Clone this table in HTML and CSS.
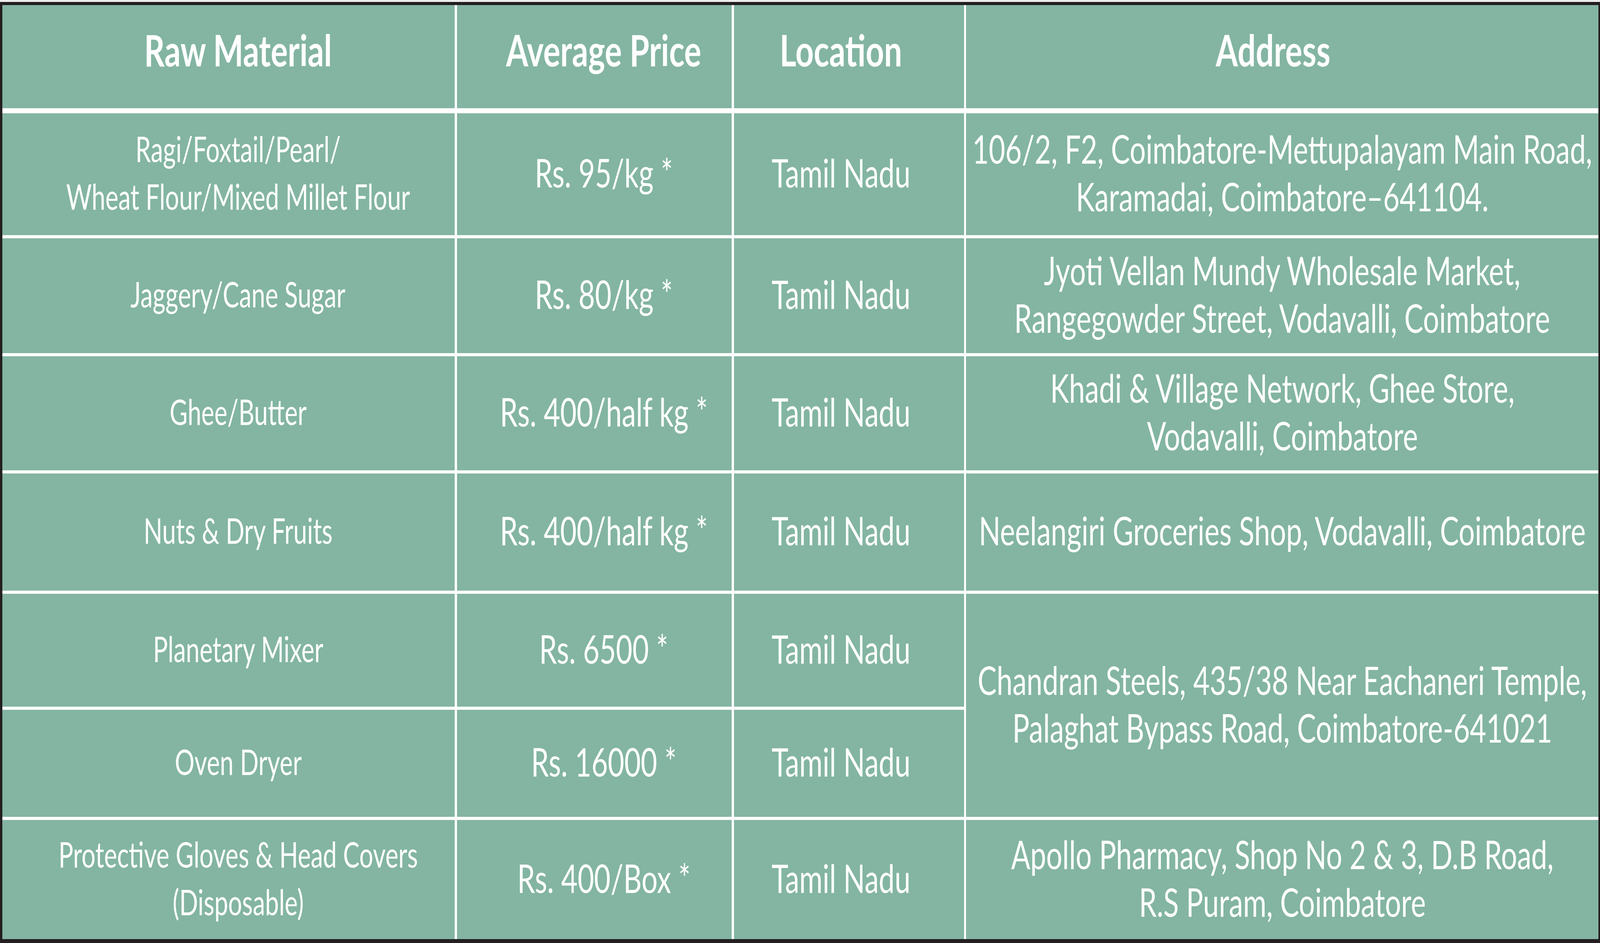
FILE: index.html
```html
<!DOCTYPE html>
<html lang="en">
<head>
<meta charset="utf-8">
<title>Raw Material Sources</title>
<link rel="stylesheet" href="styles.css">
<script src="script.js"></script>
</head>
<body>
<div class="table">
  <div class="cell c1 head"><span class="tx">Raw Material</span></div>
  <div class="cell c2 head"><span class="tx">Average Price</span></div>
  <div class="cell c3 head"><span class="tx">Location</span></div>
  <div class="cell c4 head"><span class="tx">Address</span></div>

  <div class="cell c1"><span class="tx">Ragi/Foxtail/Pearl/<br>Wheat Flour/Mixed Millet Flour</span></div>
  <div class="cell c2"><span class="tx">Rs. 95/kg *</span></div>
  <div class="cell c3"><span class="tx">Tamil Nadu</span></div>
  <div class="cell c4"><span class="tx">106/2, F2, Coimbatore-Mettupalayam Main Road,<br>Karamadai, Coimbatore–641104.</span></div>

  <div class="cell c1"><span class="tx">Jaggery/Cane Sugar</span></div>
  <div class="cell c2"><span class="tx">Rs. 80/kg *</span></div>
  <div class="cell c3"><span class="tx">Tamil Nadu</span></div>
  <div class="cell c4"><span class="tx">Jyoti Vellan Mundy Wholesale Market,<br>Rangegowder Street, Vodavalli, Coimbatore</span></div>

  <div class="cell c1"><span class="tx">Ghee/Butter</span></div>
  <div class="cell c2"><span class="tx">Rs. 400/half kg *</span></div>
  <div class="cell c3"><span class="tx">Tamil Nadu</span></div>
  <div class="cell c4"><span class="tx">Khadi &amp; Village Network, Ghee Store,<br>Vodavalli, Coimbatore</span></div>

  <div class="cell c1"><span class="tx">Nuts &amp; Dry Fruits</span></div>
  <div class="cell c2"><span class="tx">Rs. 400/half kg *</span></div>
  <div class="cell c3"><span class="tx">Tamil Nadu</span></div>
  <div class="cell c4"><span class="tx">Neelangiri Groceries Shop, Vodavalli, Coimbatore</span></div>

  <div class="cell c1"><span class="tx">Planetary Mixer</span></div>
  <div class="cell c2"><span class="tx">Rs. 6500 *</span></div>
  <div class="cell c3"><span class="tx">Tamil Nadu</span></div>
  <div class="cell c4 span2"><span class="tx">Chandran Steels, 435/38 Near Eachaneri Temple,<br>Palaghat Bypass Road, Coimbatore-641021</span></div>

  <div class="cell c1"><span class="tx">Oven Dryer</span></div>
  <div class="cell c2"><span class="tx">Rs. 16000 *</span></div>
  <div class="cell c3"><span class="tx">Tamil Nadu</span></div>

  <div class="cell c1"><span class="tx">Protective Gloves &amp; Head Covers<br>(Disposable)</span></div>
  <div class="cell c2"><span class="tx">Rs. 400/Box *</span></div>
  <div class="cell c3"><span class="tx">Tamil Nadu</span></div>
  <div class="cell c4"><span class="tx">Apollo Pharmacy, Shop No 2 &amp; 3, D.B Road,<br>R.S Puram, Coimbatore</span></div>
</div>
</body>
</html>
```
FILE: styles.css
```css
:root {
  --sx: 1;
}

html, body {
  margin: 0;
  padding: 0;
  overflow: hidden;
}

body {
  background: #ededed;
  padding-top: 5px;
  font-family: Lato, "Open Sans", "Liberation Sans", sans-serif;
  color: #ffffff;
}

.table {
  display: grid;
  width: 100%;
  box-sizing: border-box;
  grid-template-columns: 1714fr 1041fr 872fr 2395fr;
  grid-template-rows: 269px 312px 294px 292px 300px 289px 274px 305px;
  column-gap: calc(8px * var(--sx));
  row-gap: 8px;
  background: #ffffff;
  border-style: solid;
  border-color: #231f20;
  border-top-width: 8px;
  border-bottom-width: 10px;
  border-left-width: calc(9px * var(--sx));
  border-right-width: calc(7px * var(--sx));
}

.cell {
  --fw: 1.065;
  background: #83b5a2;
  display: flex;
  align-items: center;
  justify-content: center;
  text-align: center;
  white-space: nowrap;
  box-sizing: border-box;
  min-width: 0;
  font-size: 101px;
  line-height: 122px;
  padding-bottom: 10px;
}

.tx {
  display: inline-block;
  flex: none;
  transform: scaleX(calc(var(--sx) * var(--fw)));
}

.c1 {
  --fw: 1.015;
  font-size: 92px;
  padding-left: calc(72px * var(--sx));
}

.c2 {
  padding-left: calc(72px * var(--sx));
}

.c3 {
  padding-right: calc(60px * var(--sx));
}

.span2 {
  grid-row: span 2;
}

.head {
  --fw: 1.08;
  font-weight: 700;
  font-size: 112px;
  border-bottom: 5px solid #ffffff;
  background-clip: padding-box;
  padding-bottom: 36px;
}

.head.c4 {
  padding-right: calc(70px * var(--sx));
}
```
FILE: script.js
```js
(function () {
  var designWidth = 6062;
  function fit() {
    var sx = Math.min(1, window.innerWidth / designWidth);
    document.documentElement.style.setProperty('--sx', String(sx));
  }
  fit();
  window.addEventListener('resize', fit);
})();
```
